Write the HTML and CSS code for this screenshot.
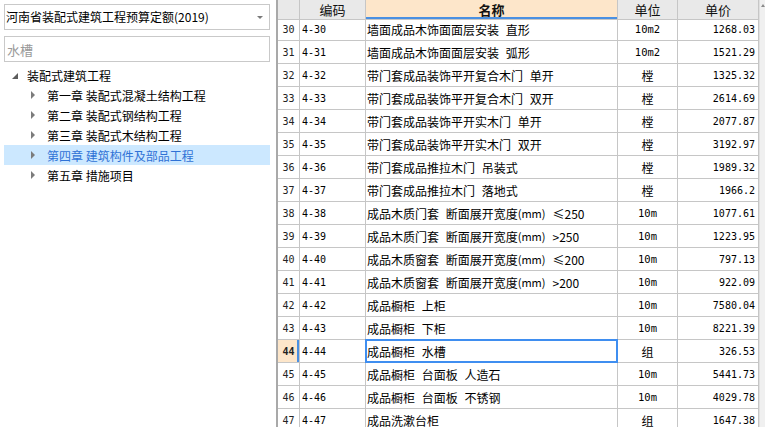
FILE: index.html
```html
<!DOCTYPE html>
<html lang="zh-CN">
<head>
<meta charset="utf-8">
<title>定额</title>
<link rel="stylesheet" href="styles.css">
</head>
<body>
<div class="app">
  <aside class="side">
    <div class="combo"><span class="combo-text">河南省装配式建筑工程预算定额(2019)</span><span class="caret"></span></div>
    <div class="search"><span class="placeholder">水槽</span></div>
    <ul class="tree">
      <li class="node root"><span class="tw-open"></span><span>装配式建筑工程</span></li>
      <li class="node child"><span class="tw"></span><span>第一章 装配式混凝土结构工程</span></li>
      <li class="node child"><span class="tw"></span><span>第二章 装配式钢结构工程</span></li>
      <li class="node child"><span class="tw"></span><span>第三章 装配式木结构工程</span></li>
      <li class="node child selected"><span class="tw"></span><span>第四章 建筑构件及部品工程</span></li>
      <li class="node child"><span class="tw"></span><span>第五章 措施项目</span></li>
    </ul>
  </aside>
  <main class="grid">
    <div class="row head">
      <div class="c num"></div>
      <div class="c code">编码</div>
      <div class="c name active-col">名称</div>
      <div class="c unit">单位</div>
      <div class="c price">单价</div>
    </div>
    <div class="row"><div class="c num">30</div><div class="c code">4-30</div><div class="c name">墙面成品木饰面面层安装 直形</div><div class="c unit mono">10m2</div><div class="c price">1268.03</div></div>
    <div class="row"><div class="c num">31</div><div class="c code">4-31</div><div class="c name">墙面成品木饰面面层安装 弧形</div><div class="c unit mono">10m2</div><div class="c price">1521.29</div></div>
    <div class="row"><div class="c num">32</div><div class="c code">4-32</div><div class="c name">带门套成品装饰平开复合木门 单开</div><div class="c unit">樘</div><div class="c price">1325.32</div></div>
    <div class="row"><div class="c num">33</div><div class="c code">4-33</div><div class="c name">带门套成品装饰平开复合木门 双开</div><div class="c unit">樘</div><div class="c price">2614.69</div></div>
    <div class="row"><div class="c num">34</div><div class="c code">4-34</div><div class="c name">带门套成品装饰平开实木门 单开</div><div class="c unit">樘</div><div class="c price">2077.87</div></div>
    <div class="row"><div class="c num">35</div><div class="c code">4-35</div><div class="c name">带门套成品装饰平开实木门 双开</div><div class="c unit">樘</div><div class="c price">3192.97</div></div>
    <div class="row"><div class="c num">36</div><div class="c code">4-36</div><div class="c name">带门套成品推拉木门 吊装式</div><div class="c unit">樘</div><div class="c price">1989.32</div></div>
    <div class="row"><div class="c num">37</div><div class="c code">4-37</div><div class="c name">带门套成品推拉木门 落地式</div><div class="c unit">樘</div><div class="c price">1966.2</div></div>
    <div class="row"><div class="c num">38</div><div class="c code">4-38</div><div class="c name">成品木质门套 断面展开宽度<span class="sm">(mm)</span><span class="lim">≤250</span></div><div class="c unit mono">10m</div><div class="c price">1077.61</div></div>
    <div class="row"><div class="c num">39</div><div class="c code">4-39</div><div class="c name">成品木质门套 断面展开宽度<span class="sm">(mm)</span><span class="lim">&gt;250</span></div><div class="c unit mono">10m</div><div class="c price">1223.95</div></div>
    <div class="row"><div class="c num">40</div><div class="c code">4-40</div><div class="c name">成品木质窗套 断面展开宽度<span class="sm">(mm)</span><span class="lim">≤200</span></div><div class="c unit mono">10m</div><div class="c price">797.13</div></div>
    <div class="row"><div class="c num">41</div><div class="c code">4-41</div><div class="c name">成品木质窗套 断面展开宽度<span class="sm">(mm)</span><span class="lim">&gt;200</span></div><div class="c unit mono">10m</div><div class="c price">922.09</div></div>
    <div class="row"><div class="c num">42</div><div class="c code">4-42</div><div class="c name">成品橱柜 上柜</div><div class="c unit mono">10m</div><div class="c price">7580.04</div></div>
    <div class="row"><div class="c num">43</div><div class="c code">4-43</div><div class="c name">成品橱柜 下柜</div><div class="c unit mono">10m</div><div class="c price">8221.39</div></div>
    <div class="row current"><div class="c num">44</div><div class="c code">4-44</div><div class="c name focus">成品橱柜 水槽</div><div class="c unit">组</div><div class="c price">326.53</div></div>
    <div class="row"><div class="c num">45</div><div class="c code">4-45</div><div class="c name">成品橱柜 台面板 人造石</div><div class="c unit mono">10m</div><div class="c price">5441.73</div></div>
    <div class="row"><div class="c num">46</div><div class="c code">4-46</div><div class="c name">成品橱柜 台面板 不锈钢</div><div class="c unit mono">10m</div><div class="c price">4029.78</div></div>
    <div class="row"><div class="c num">47</div><div class="c code">4-47</div><div class="c name">成品洗漱台柜</div><div class="c unit">组</div><div class="c price">1647.38</div></div>
  </main>
  <div class="vscroll"><span class="up"></span></div>
</div>
</body>
</html>
```

FILE: styles.css
```css
* { box-sizing: border-box; }
html, body { margin: 0; padding: 0; background: #fff; }
body {
  width: 765px;
  height: 427px;
  overflow: hidden;
  font-family: "Noto Sans CJK SC", "Microsoft YaHei", sans-serif;
  color: #000;
}
.app {
  display: flex;
  height: 427px;
}

/* ---------- left panel ---------- */
.side {
  width: 276px;
  flex: none;
  padding: 4px 6px 0 4px;
  background: #fff;
}
.combo {
  height: 26px;
  border: 1px solid #c9c9c9;
  display: flex;
  align-items: center;
  padding: 0 6px 0 1px;
  font-size: 12px;
  line-height: 1;
}
.combo-text { flex: 1; white-space: nowrap; }
.caret {
  width: 0; height: 0;
  border-left: 3px solid transparent;
  border-right: 3px solid transparent;
  border-top: 3px solid #7a7a7a;
}
.search {
  margin-top: 6px;
  height: 26px;
  border: 1px solid #c9c9c9;
  display: flex;
  align-items: center;
  padding-left: 2px;
  font-size: 13px;
}
.placeholder { color: #9a9a9a; }
.tree {
  list-style: none;
  margin: 3px 0 0 0;
  padding: 0;
  font-size: 12px;
}
.node {
  height: 20px;
  display: flex;
  align-items: center;
  white-space: nowrap;
}
.root { padding-left: 8px; }
.child { padding-left: 27px; }
.node.selected { background: #cce8ff; color: #2f72d6; }
.tw-open {
  width: 0; height: 0;
  border-left: 6px solid transparent;
  border-bottom: 6px solid #5d5d5d;
  margin-right: 9px;
  margin-top: 1px;
}
.tw {
  width: 0; height: 0;
  border-top: 4px solid transparent;
  border-bottom: 4px solid transparent;
  border-left: 4px solid #7c7c7c;
  margin-right: 12px;
}

/* ---------- grid ---------- */
.grid {
  width: 483px;
  flex: none;
  border-left: 2px solid #a9a9a9;
  font-size: 12px;
}
.row {
  display: grid;
  grid-template-columns: 22px 66px 252px 60px 81px;
  height: 23px;
}
.row.head { height: 18px; }
.c {
  border-right: 1px solid #c6c6c6;
  border-bottom: 1px solid #c6c6c6;
  display: flex;
  align-items: center;
  white-space: pre;
  overflow: visible;
}
.num {
  justify-content: center;
  font-family: "DejaVu Sans Mono", monospace;
  font-size: 10px;
  color: #222;
}
.code {
  padding-left: 2px;
  font-family: "DejaVu Sans Mono", monospace;
  font-size: 10px;
}
.name { padding-left: 1px; word-spacing: 4px; }
.sm { font-size: 11px; word-spacing: 0; }
.lim { margin-left: 7px; }
.unit { justify-content: center; }
.unit.mono { font-family: "DejaVu Sans Mono", monospace; font-size: 10.5px; }
.price {
  justify-content: flex-end;
  padding-right: 3px;
  font-family: "DejaVu Sans Mono", monospace;
  font-size: 10px;
}
.head .c {
  background: #e9e9e9;
  justify-content: center;
  font-family: "Noto Sans CJK SC", sans-serif;
  font-size: 13px;
  padding: 0;
  color: #111;
}
.head .c.active-col {
  background: #fde6ca;
  font-weight: bold;
  box-shadow: inset 0 -2px 0 #4a90e2;
}
.current .num {
  background: #fde6ca;
  font-weight: bold;
  box-shadow: inset -2px 0 0 #4a90e2;
}
.focus { position: relative; }
.focus::after {
  content: "";
  position: absolute;
  left: -1px; top: -1px; right: -1px; bottom: -1px;
  border: 2px solid #3f8ef0;
}

/* ---------- scrollbar ---------- */
.vscroll {
  flex: 1;
  background: #f0f0f0;
  border-left: 1px solid #e0e0e0;
  display: flex;
  justify-content: center;
  padding-top: 4px;
}
.up {
  width: 0; height: 0;
  border-left: 2px solid transparent;
  border-right: 2px solid transparent;
  border-bottom: 3px solid #8a8a8a;
}
```
